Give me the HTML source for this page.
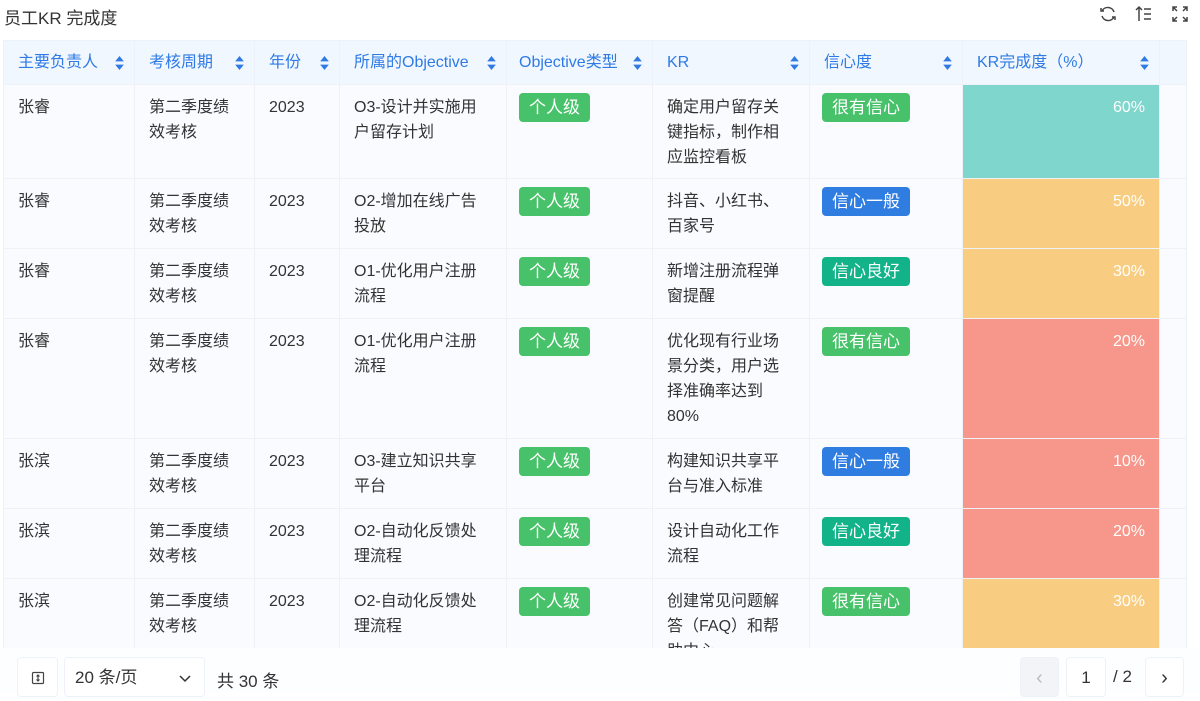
<!DOCTYPE html><html><head><meta charset="utf-8"><style>
*{box-sizing:border-box;margin:0;padding:0}
body{width:1200px;height:692px;overflow:hidden;background:#fff;font-family:"Liberation Sans","Noto Sans CJK SC",sans-serif;color:#333;position:relative}
.title{position:absolute;left:4px;top:4px;font-size:17px;color:#333}
.icons{position:absolute;top:4px;right:10px;display:flex;gap:16px}
table{position:absolute;left:3px;top:40px;border-collapse:collapse;table-layout:fixed;width:1183px}
th,td{border:1px solid #eef2f8;vertical-align:top;text-align:left;font-size:16px;line-height:25px;padding:0 14px;font-weight:normal}
th{background:#f0f7ff;color:#2f7ae5;height:44px;vertical-align:middle;position:relative}
th .s{position:absolute;right:10px;top:15px;width:9px;height:14px}
td{background:#f9fbfe;padding-top:10px;color:#333}
td.kr{padding-right:24px}
.tag{display:inline-block;color:#fff;font-size:17px;line-height:29px;height:29px;padding:0 10px;border-radius:4px;margin-top:-2px}
.g{background:#48c26a}.b{background:#2f7de1}.t{background:#13b38a}
td.bar{color:#fff;text-align:right;padding-right:14px}
.r1{height:94px}.r2{height:70px}.r4{height:120px}
.foot{position:absolute;left:0;top:648px;width:1200px;height:44px;background:#fdfeff}
.box{position:absolute;top:9px;height:40px;border:1px solid #eef2f8;border-radius:4px;background:#fff;font-size:16px;color:#333;line-height:40px}
</style></head><body>
<div class="title">员工KR 完成度</div>
<div class="icons">
<svg width="20" height="20" viewBox="0 0 20 20" fill="none" stroke="#444" stroke-width="1.5"><path d="M16 8A6.5 6.5 0 0 0 4 7M4 12a6.5 6.5 0 0 0 12 1"/><path d="M3 4v3h3M17 16v-3h-3"/></svg>
<svg width="20" height="20" viewBox="0 0 20 20" fill="none" stroke="#444" stroke-width="1.5"><path d="M5 17V3M2 6l3-3 3 3M10 5h7M10 10h7M10 15h7"/></svg>
<svg width="20" height="20" viewBox="0 0 20 20" fill="none" stroke="#444" stroke-width="1.5"><path d="M3 7V3h4M13 3h4v4M17 13v4h-4M7 17H3v-4M3 3l4 4M17 3l-4 4M17 17l-4-4M3 17l4-4"/></svg>
</div>
<table>
<colgroup><col style="width:131px"><col style="width:120px"><col style="width:85px"><col style="width:167px"><col style="width:146px"><col style="width:157px"><col style="width:153px"><col style="width:197px"><col style="width:27px"></colgroup>
<tr><th>主要负责人<svg class="s" viewBox="0 0 8 13"><path d="M4 0L8 5H0zM4 13L0 8h8z" fill="#2f7ae5"/></svg></th><th>考核周期<svg class="s" viewBox="0 0 8 13"><path d="M4 0L8 5H0zM4 13L0 8h8z" fill="#2f7ae5"/></svg></th><th>年份<svg class="s" viewBox="0 0 8 13"><path d="M4 0L8 5H0zM4 13L0 8h8z" fill="#2f7ae5"/></svg></th><th>所属的Objective<svg class="s" viewBox="0 0 8 13"><path d="M4 0L8 5H0zM4 13L0 8h8z" fill="#2f7ae5"/></svg></th><th style="padding-left:12px">Objective类型<svg class="s" viewBox="0 0 8 13"><path d="M4 0L8 5H0zM4 13L0 8h8z" fill="#2f7ae5"/></svg></th><th>KR<svg class="s" viewBox="0 0 8 13"><path d="M4 0L8 5H0zM4 13L0 8h8z" fill="#2f7ae5"/></svg></th><th>信心度<svg class="s" viewBox="0 0 8 13"><path d="M4 0L8 5H0zM4 13L0 8h8z" fill="#2f7ae5"/></svg></th><th>KR完成度（%）<svg class="s" viewBox="0 0 8 13"><path d="M4 0L8 5H0zM4 13L0 8h8z" fill="#2f7ae5"/></svg></th><th></th></tr>
<tr class="r1"><td>张睿</td><td>第二季度绩效考核</td><td>2023</td><td>O3-设计并实施用户留存计划</td><td style="padding-left:12px"><span class="tag g">个人级</span></td><td class="kr">确定用户留存关键指标，制作相应监控看板</td><td style="padding-left:12px"><span class="tag g">很有信心</span></td><td class="bar" style="background:#7fd6cd">60%</td><td></td></tr>
<tr class="r2"><td>张睿</td><td>第二季度绩效考核</td><td>2023</td><td>O2-增加在线广告投放</td><td style="padding-left:12px"><span class="tag g">个人级</span></td><td class="kr">抖音、小红书、百家号</td><td style="padding-left:12px"><span class="tag b">信心一般</span></td><td class="bar" style="background:#f8cd82">50%</td><td></td></tr>
<tr class="r2"><td>张睿</td><td>第二季度绩效考核</td><td>2023</td><td>O1-优化用户注册流程</td><td style="padding-left:12px"><span class="tag g">个人级</span></td><td class="kr">新增注册流程弹窗提醒</td><td style="padding-left:12px"><span class="tag t">信心良好</span></td><td class="bar" style="background:#f8cd82">30%</td><td></td></tr>
<tr class="r4"><td>张睿</td><td>第二季度绩效考核</td><td>2023</td><td>O1-优化用户注册流程</td><td style="padding-left:12px"><span class="tag g">个人级</span></td><td class="kr">优化现有行业场景分类，用户选择准确率达到80%</td><td style="padding-left:12px"><span class="tag g">很有信心</span></td><td class="bar" style="background:#f7968a">20%</td><td></td></tr>
<tr class="r2"><td>张滨</td><td>第二季度绩效考核</td><td>2023</td><td>O3-建立知识共享平台</td><td style="padding-left:12px"><span class="tag g">个人级</span></td><td class="kr">构建知识共享平台与准入标准</td><td style="padding-left:12px"><span class="tag b">信心一般</span></td><td class="bar" style="background:#f7968a">10%</td><td></td></tr>
<tr class="r2"><td>张滨</td><td>第二季度绩效考核</td><td>2023</td><td>O2-自动化反馈处理流程</td><td style="padding-left:12px"><span class="tag g">个人级</span></td><td class="kr">设计自动化工作流程</td><td style="padding-left:12px"><span class="tag t">信心良好</span></td><td class="bar" style="background:#f7968a">20%</td><td></td></tr>
<tr class="r1"><td>张滨</td><td>第二季度绩效考核</td><td>2023</td><td>O2-自动化反馈处理流程</td><td style="padding-left:12px"><span class="tag g">个人级</span></td><td class="kr">创建常见问题解答（FAQ）和帮助中心</td><td style="padding-left:12px"><span class="tag g">很有信心</span></td><td class="bar" style="background:#f8cd82">30%</td><td></td></tr>
</table>
<div class="foot">
<div class="box" style="left:17px;width:41px;text-align:center"><svg width="14" height="14" viewBox="0 0 14 14" fill="none" stroke="#444" stroke-width="1.2" style="margin-top:13px"><rect x="1.5" y="1.5" width="11" height="11" rx="1"/><path d="M7 4v6M5.5 5.5L7 4l1.5 1.5M5.5 8.5L7 10l1.5-1.5"/></svg></div>
<div class="box" style="left:64px;width:141px;padding-left:10px;font-size:17px">20 条/页<svg width="14" height="10" viewBox="0 0 14 10" fill="none" stroke="#333" stroke-width="1.5" style="position:absolute;right:12px;top:16px"><path d="M2 2l5 5 5-5"/></svg></div>
<div style="position:absolute;left:217px;top:19px;font-size:17px;color:#333">共 30 条</div>
<div class="box" style="left:1020px;width:39px;background:#f2f4f8;text-align:center;color:#bbb;font-size:20px">&lsaquo;</div>
<div class="box" style="left:1066px;width:40px;text-align:center;font-size:17px">1</div>
<div style="position:absolute;left:1113px;top:19px;font-size:17px;color:#333">/ 2</div>
<div class="box" style="left:1145px;width:39px;text-align:center;font-size:20px">&rsaquo;</div>
</div>
</body></html>
